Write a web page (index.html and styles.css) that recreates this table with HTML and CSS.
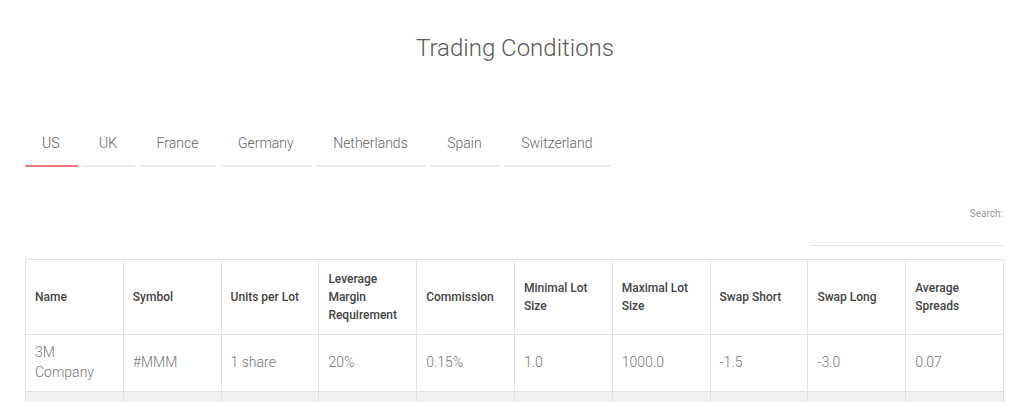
FILE: index.html
```html
<!DOCTYPE html>
<html lang="en">
<head>
<meta charset="utf-8">
<title>Trading Conditions</title>
<link rel="stylesheet" href="styles.css">
</head>
<body>
<div class="page">
  <h1 class="title">Trading Conditions</h1>
  <ul class="tabs">
    <li class="tab active">US</li>
    <li class="tab">UK</li>
    <li class="tab">France</li>
    <li class="tab">Germany</li>
    <li class="tab">Netherlands</li>
    <li class="tab">Spain</li>
    <li class="tab">Switzerland</li>
  </ul>
  <div class="search">
    <label class="search-label">Search:</label>
    <div class="search-input"></div>
  </div>
  <table class="grid">
    <thead>
      <tr>
        <th>Name</th>
        <th>Symbol</th>
        <th>Units per Lot</th>
        <th>Leverage Margin Requirement</th>
        <th>Commission</th>
        <th>Minimal Lot Size</th>
        <th>Maximal Lot Size</th>
        <th>Swap Short</th>
        <th>Swap Long</th>
        <th>Average Spreads</th>
      </tr>
    </thead>
    <tbody>
      <tr>
        <td>3M Company</td>
        <td>#MMM</td>
        <td>1 share</td>
        <td>20%</td>
        <td>0.15%</td>
        <td>1.0</td>
        <td>1000.0</td>
        <td>-1.5</td>
        <td>-3.0</td>
        <td>0.07</td>
      </tr>
      <tr class="stripe">
        <td>&nbsp;</td><td></td><td></td><td></td><td></td><td></td><td></td><td></td><td></td><td></td>
      </tr>
    </tbody>
  </table>
</div>
</body>
</html>
```

FILE: styles.css
```css
html, body {
  margin: 0;
  padding: 0;
  background: #ffffff;
  font-family: Roboto, "Liberation Sans", Arial, sans-serif;
  overflow: hidden;
}

.page {
  padding: 32px 21px 0 25px;
  display: flex;
  flex-direction: column;
}

.title {
  margin: 0;
  text-align: center;
  font-size: 24px;
  line-height: 32px;
  font-weight: 300;
  color: #5a5a5a;
  padding-left: 2px;
}

.tabs {
  list-style: none;
  margin: 59px 0 0 0;
  padding: 0;
  display: flex;
  gap: 4.5px;
}

.tab {
  padding: 10px 18px 12px 17px;
  font-size: 14px;
  line-height: 20px;
  font-weight: 300;
  color: #666666;
  border-bottom: 2px solid #ececec;
}

.tab.active {
  color: #555555;
  border-bottom-color: #ec7a82;
}

.search {
  margin-top: 40px;
  display: flex;
  flex-direction: column;
  align-items: flex-end;
}

.search-label {
  font-size: 10px;
  line-height: 14px;
  color: #999999;
  font-weight: 400;
}

.search-input {
  width: 193px;
  height: 24px;
  border-bottom: 1px solid #e4e4e4;
}

.grid {
  margin-top: 13px;
  width: 979px;
  border-collapse: collapse;
  table-layout: fixed;
}

.grid th,
.grid td {
  border: 1px solid #e2e2e2;
  text-align: left;
  vertical-align: middle;
}

.grid th {
  padding: 10px 9px;
  font-size: 12px;
  line-height: 18px;
  font-weight: 500;
  color: #444444;
}

.grid td {
  padding: 7px 9px 9px;
  font-size: 14px;
  line-height: 20px;
  font-weight: 300;
  color: #777777;
}

.grid tr.stripe td {
  background: #f2f2f2;
}
```
